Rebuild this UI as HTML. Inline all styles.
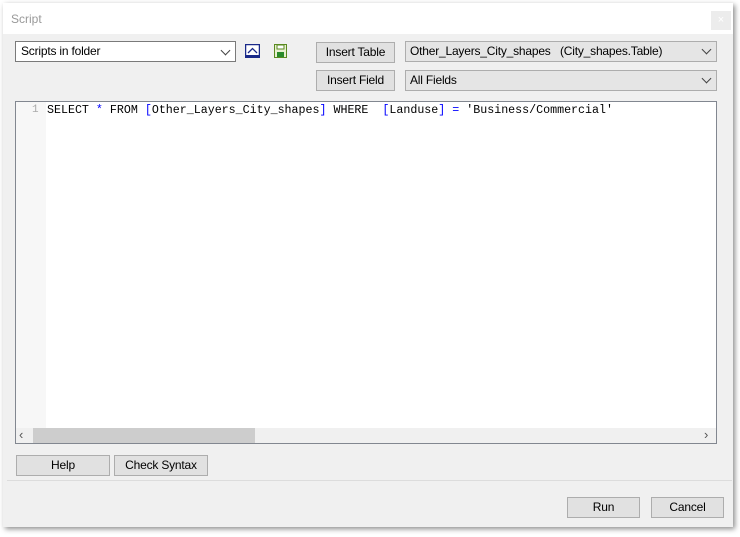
<!DOCTYPE html><html><head><style>
body{margin:0;width:740px;height:537px;background:#fff;position:relative;overflow:hidden;font-family:"Liberation Sans",sans-serif;font-size:12px;color:#000}
.a{position:absolute;box-sizing:border-box}
.win{left:3px;top:3px;width:730px;height:524px;background:#f0f0f0;box-shadow:2px 2px 5px rgba(0,0,0,.45)}
.btn{background:#e1e1e1;border:1px solid #adadad;text-align:center;line-height:19px;letter-spacing:-0.2px}
.cb{background:#e5e5e5;border:1px solid #adadad;line-height:19px;padding-left:4px;letter-spacing:-0.2px}
.chev{position:absolute;right:6px;top:4px;width:6px;height:6px;border-right:1px solid #444;border-bottom:1px solid #444;transform:rotate(45deg)}
.code{font-family:"Liberation Mono",monospace;font-size:11.65px}
</style></head><body>
<div class="a win"></div>
<div class="a" style="left:3px;top:3px;width:730px;height:31px;background:#fff"></div>
<div class="a" style="left:11px;top:12px;color:#999;font-size:12px">Script</div>
<div class="a" style="left:711px;top:11px;width:20px;height:19px;background:#ececec;color:#fff;text-align:center;line-height:18px;font-size:11px">×</div>
<div class="a" style="left:15px;top:41px;width:221px;height:21px;background:#fff;border:1px solid #7a7a7a;line-height:19px;padding-left:5px;letter-spacing:-0.2px">Scripts in folder<span class="chev" style="top:5px"></span></div>
<svg class="a" style="left:245px;top:44px" width="15" height="14"><rect x="0.5" y="0.5" width="14" height="13" fill="#fff" stroke="#1a2a8a" stroke-width="1.5"/><path d="M3 9 L7.5 4.5 L12 9" fill="none" stroke="#1a2a8a" stroke-width="1.3"/><rect x="1" y="11" width="13" height="2" fill="#1a2a8a"/></svg>
<svg class="a" style="left:274px;top:44px" width="13" height="14"><rect x="0.5" y="0.5" width="12" height="13" fill="#e8f0d0" stroke="#5a8a20"/><rect x="3" y="1" width="7" height="4" fill="#fff" stroke="#5a8a20"/><rect x="3" y="8" width="7" height="5" fill="#2a8a2a"/></svg>
<div class="a btn" style="left:316px;top:42px;width:79px;height:21px">Insert Table</div>
<div class="a btn" style="left:316px;top:70px;width:79px;height:21px">Insert Field</div>
<div class="a cb" style="left:405px;top:41px;width:312px;height:21px">Other_Layers_City_shapes &nbsp; (City_shapes.Table)<span class="chev"></span></div>
<div class="a cb" style="left:405px;top:70px;width:312px;height:21px">All Fields<span class="chev"></span></div>
<div class="a" style="left:15px;top:101px;width:702px;height:343px;background:#fff;border:1px solid #828790"></div>
<div class="a" style="left:16px;top:102px;width:30px;height:326px;background:#f7f7f7"></div>
<div class="a code" style="left:32px;top:104px;color:#aaa;font-size:11px">1</div>
<div class="a code" style="left:47px;top:104px;white-space:pre">SELECT <span style="color:#00f">*</span> FROM <span style="color:#00f">[</span>Other_Layers_City_shapes<span style="color:#00f">]</span> WHERE  <span style="color:#00f">[</span>Landuse<span style="color:#00f">]</span> <span style="color:#00f">=</span> 'Business/Commercial'</div>
<div class="a" style="left:16px;top:428px;width:700px;height:15px;background:#f0f0f0"></div>
<div class="a" style="left:33px;top:428px;width:222px;height:15px;background:#cdcdcd"></div>
<div class="a" style="left:19px;top:427px;color:#555;font-size:13px">‹</div>
<div class="a" style="left:704px;top:427px;color:#555;font-size:13px">›</div>
<div class="a btn" style="left:16px;top:455px;width:94px;height:21px">Help</div>
<div class="a btn" style="left:114px;top:455px;width:94px;height:21px">Check Syntax</div>
<div class="a" style="left:7px;top:480px;width:725px;height:1px;background:#dcdcdc"></div>
<div class="a btn" style="left:567px;top:497px;width:73px;height:21px">Run</div>
<div class="a btn" style="left:651px;top:497px;width:73px;height:21px">Cancel</div>
</body></html>
